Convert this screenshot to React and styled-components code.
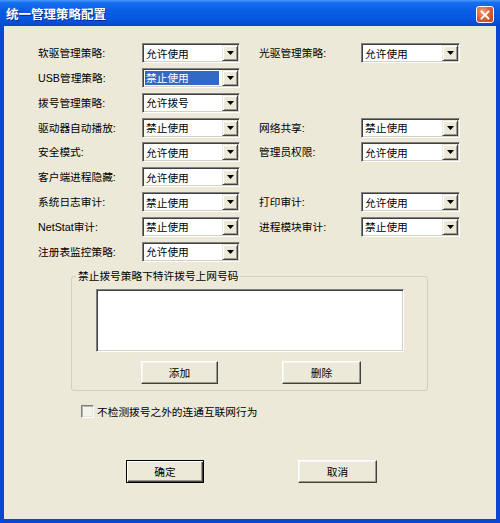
import React from 'react';
import styled, { createGlobalStyle } from 'styled-components';

const GlobalStyle = createGlobalStyle`
  html, body {
    margin: 0;
    padding: 0;
    overflow: hidden;
    background: #ffffff;
  }
`;

const Window = styled.div`
  width: 500px;
  height: 523px;
  display: flex;
  flex-direction: column;
  box-sizing: border-box;
  background: #0a45d3;
  font-family: "Liberation Sans", "Noto Sans CJK SC", sans-serif;
  font-size: 10.7px;
  color: #000;
`;

const TitleBar = styled.div`
  height: 26px;
  flex-shrink: 0;
  display: flex;
  align-items: center;
  justify-content: space-between;
  padding: 0 6px;
  background: linear-gradient(
    to bottom,
    #4a9bff 0%,
    #166fee 10%,
    #0a5de6 40%,
    #0556df 75%,
    #0449cc 100%
  );
`;

const Title = styled.span`
  color: #ffffff;
  font-family: "Noto Sans CJK SC", sans-serif;
  font-weight: 700;
  font-size: 12.5px;
  text-shadow: 1px 1px 0 #0a2a8a;
  margin-top: 1px;
`;

const CloseButton = styled.div`
  width: 18px;
  height: 17px;
  box-sizing: border-box;
  border: 1px solid #ffffff;
  border-radius: 3px;
  background: radial-gradient(circle at 35% 30%, #f0a27f 0%, #e0623d 45%, #c23c1e 100%);
  display: flex;
  align-items: center;
  justify-content: center;
  margin-top: 3px;
`;

const Client = styled.div`
  flex: 1;
  margin: 0 4px 4px 4px;
  background: #ece9d8;
  display: flex;
  flex-direction: column;
  padding-top: 17px;
  box-sizing: border-box;
`;

const PolicyGrid = styled.div`
  display: grid;
  grid-template-columns: 104px 98px 19px 102px 99px;
  grid-auto-rows: 20px;
  row-gap: 4.85px;
  margin-left: 34px;
  align-items: center;
`;

const Label = styled.span`
  white-space: nowrap;
  line-height: 20px;
  grid-column: ${(p) => (p.$right ? 4 : 1)};
`;

const ComboBox = styled.div`
  grid-column: ${(p) => (p.$right ? 5 : 2)};
  height: 20px;
  box-sizing: border-box;
  background: #ffffff;
  border-top: 1px solid #808080;
  border-left: 1px solid #808080;
  border-right: 1px solid #ffffff;
  border-bottom: 1px solid #ffffff;
  box-shadow: inset 1px 1px 0 #404040, inset -1px -1px 0 #d4d0c8;
  display: flex;
  align-items: stretch;
  padding: 1px 1px 1px 2px;
`;

const ComboText = styled.span`
  flex: 1;
  margin: 1px 3px 1px 0;
  padding-left: 1px;
  display: flex;
  align-items: center;
  background: ${(p) => (p.$selected ? '#316ac5' : 'transparent')};
  color: ${(p) => (p.$selected ? '#ffffff' : '#000000')};
`;

const ArrowButton = styled.span`
  width: 16px;
  box-sizing: border-box;
  background: #ece9d8;
  border-top: 1px solid #ece9d8;
  border-left: 1px solid #ece9d8;
  border-right: 1px solid #404040;
  border-bottom: 1px solid #404040;
  box-shadow: inset 1px 1px 0 #ffffff, inset -1px -1px 0 #9d9a8c;
  display: flex;
  align-items: center;
  justify-content: center;
`;

const GroupBox = styled.div`
  position: relative;
  margin: 14px 0 0 67px;
  width: 357px;
  box-sizing: border-box;
  border: 1px solid #d0d0bf;
  border-radius: 3px;
  padding: 12px 0 6px 24px;
  display: flex;
  flex-direction: column;
`;

const Legend = styled.span`
  position: absolute;
  top: -8px;
  left: 4px;
  padding: 0 2px;
  background: #ece9d8;
  line-height: 15px;
  white-space: nowrap;
`;

const ListBox = styled.div`
  width: 308px;
  height: 63px;
  box-sizing: border-box;
  background: #ffffff;
  border-top: 1px solid #808080;
  border-left: 1px solid #808080;
  border-right: 1px solid #ffffff;
  border-bottom: 1px solid #ffffff;
  box-shadow: inset 1px 1px 0 #404040, inset -1px -1px 0 #d4d0c8;
`;

const ButtonRow = styled.div`
  display: flex;
  gap: ${(p) => p.$gap}px;
  margin-left: ${(p) => p.$left}px;
  margin-top: ${(p) => p.$top}px;
`;

const Button = styled.button`
  width: ${(p) => p.$width}px;
  height: 23px;
  box-sizing: border-box;
  padding: 0;
  background: #ece9d8;
  font-family: "Liberation Sans", "Noto Sans CJK SC", sans-serif;
  font-size: 10.7px;
  color: #000;
  border-style: solid;
  border-width: 1px;
  border-color: ${(p) =>
    p.$default ? '#000000' : '#ffffff #404040 #404040 #ffffff'};
  box-shadow: ${(p) =>
    p.$default
      ? 'inset 1px 1px 0 #ffffff, inset -1px -1px 0 #404040, inset -2px -2px 0 #9d9a8c'
      : 'inset -1px -1px 0 #9d9a8c, inset 1px 1px 0 #f6f5ee'};
`;

const CheckRow = styled.label`
  display: flex;
  align-items: center;
  gap: 3px;
  margin: 13px 0 0 77px;
`;

const CheckBox = styled.span`
  width: 13px;
  height: 13px;
  box-sizing: border-box;
  background: #f4f3ee;
  border-top: 1px solid #808080;
  border-left: 1px solid #808080;
  border-right: 1px solid #ffffff;
  border-bottom: 1px solid #ffffff;
  box-shadow: inset 1px 1px 0 #b8b5a6, inset -1px -1px 0 #e6e3d6;
`;

function Combo({ value, right, selected }) {
  return (
    <ComboBox $right={right}>
      <ComboText $selected={selected}>{value}</ComboText>
      <ArrowButton>
        <svg width="7" height="4" viewBox="0 0 7 4">
          <path d="M0 0H7L3.5 4Z" fill="#000" />
        </svg>
      </ArrowButton>
    </ComboBox>
  );
}

const rows = [
  { l: '软驱管理策略:', lv: '允许使用', r: '光驱管理策略:', rv: '允许使用' },
  { l: 'USB管理策略:', lv: '禁止使用', sel: true },
  { l: '拨号管理策略:', lv: '允许拨号' },
  { l: '驱动器自动播放:', lv: '禁止使用', r: '网络共享:', rv: '禁止使用' },
  { l: '安全模式:', lv: '允许使用', r: '管理员权限:', rv: '允许使用' },
  { l: '客户端进程隐藏:', lv: '允许使用' },
  { l: '系统日志审计:', lv: '禁止使用', r: '打印审计:', rv: '允许使用' },
  { l: 'NetStat审计:', lv: '禁止使用', r: '进程模块审计:', rv: '禁止使用' },
  { l: '注册表监控策略:', lv: '允许使用' },
];

export default function App() {
  return (
    <>
      <GlobalStyle />
      <Window>
        <TitleBar>
          <Title>统一管理策略配置</Title>
          <CloseButton>
            <svg width="10" height="10" viewBox="0 0 10 10">
              <path d="M1.5 1.5L8.5 8.5M8.5 1.5L1.5 8.5" stroke="#fff" strokeWidth="1.8" strokeLinecap="square" />
            </svg>
          </CloseButton>
        </TitleBar>
        <Client>
          <PolicyGrid>
            {rows.map((row, i) => (
              <React.Fragment key={i}>
                <Label style={{ gridRow: i + 1 }}>{row.l}</Label>
                <Combo value={row.lv} selected={row.sel} />
                {row.r && (
                  <>
                    <Label $right style={{ gridRow: i + 1 }}>{row.r}</Label>
                    <Combo value={row.rv} right />
                  </>
                )}
              </React.Fragment>
            ))}
          </PolicyGrid>

          <GroupBox>
            <Legend>禁止拨号策略下特许拨号上网号码</Legend>
            <ListBox />
            <ButtonRow $gap={64} $left={45} $top={9}>
              <Button $width={77}>添加</Button>
              <Button $width={79}>删除</Button>
            </ButtonRow>
          </GroupBox>

          <CheckRow>
            <CheckBox />
            <span>不检测拨号之外的连通互联网行为</span>
          </CheckRow>

          <ButtonRow $gap={94} $left={122} $top={41}>
            <Button $width={78} $default>确定</Button>
            <Button $width={79}>取消</Button>
          </ButtonRow>
        </Client>
      </Window>
    </>
  );
}
